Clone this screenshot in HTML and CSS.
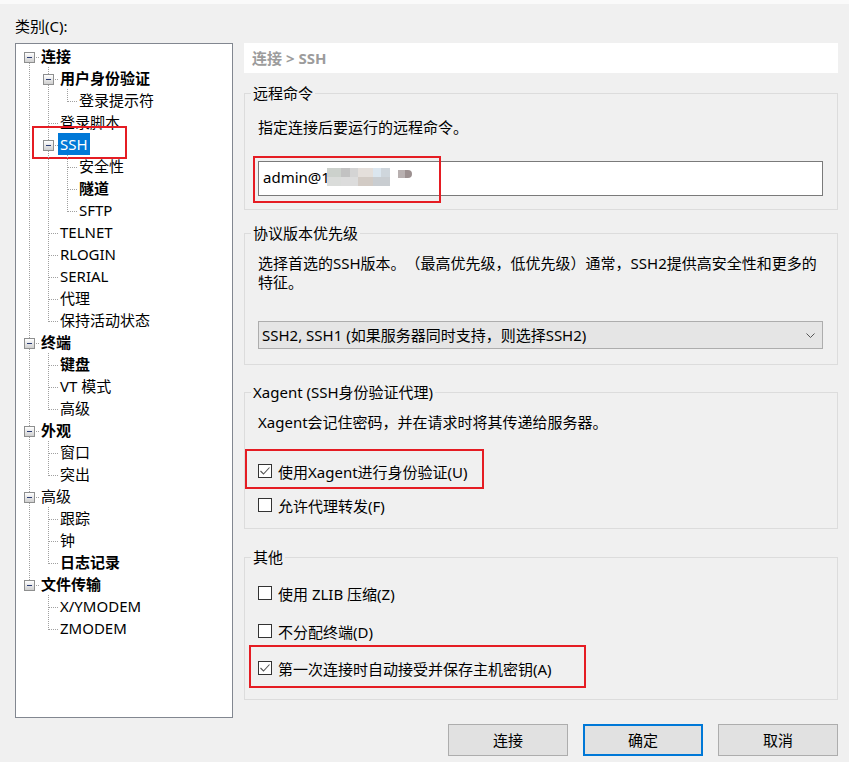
FILE: index.html
```html
<!DOCTYPE html>
<html lang="zh-CN">
<head>
<meta charset="utf-8">
<title>SSH</title>
<link rel="stylesheet" href="styles.css">
</head>
<body>
<div class="topband"></div>
<div class="dialog">
  <div class="main">
    <div class="left">
      <div class="cat-label">类别(C):</div>
      <div class="tree">
        <div class="row"><span class="c first"><i class="exp"></i></span><span class="lbl b">连接</span></div>
        <div class="row"><span class="c v"></span><span class="c tee"><i class="exp"></i></span><span class="lbl b">用户身份验证</span></div>
        <div class="row"><span class="c v"></span><span class="c v"></span><span class="c ell"></span><span class="lbl">登录提示符</span></div>
        <div class="row"><span class="c v"></span><span class="c tee"></span><span class="lbl">登录脚本</span></div>
        <div class="row"><span class="c v"></span><span class="c tee"><i class="exp"></i></span><span class="lbl sel">SSH</span><div class="annot a-ssh"></div></div>
        <div class="row"><span class="c v"></span><span class="c v"></span><span class="c tee"></span><span class="lbl">安全性</span></div>
        <div class="row"><span class="c v"></span><span class="c v"></span><span class="c tee"></span><span class="lbl b">隧道</span></div>
        <div class="row"><span class="c v"></span><span class="c v"></span><span class="c ell"></span><span class="lbl">SFTP</span></div>
        <div class="row"><span class="c v"></span><span class="c tee"></span><span class="lbl">TELNET</span></div>
        <div class="row"><span class="c v"></span><span class="c tee"></span><span class="lbl">RLOGIN</span></div>
        <div class="row"><span class="c v"></span><span class="c tee"></span><span class="lbl">SERIAL</span></div>
        <div class="row"><span class="c v"></span><span class="c tee"></span><span class="lbl">代理</span></div>
        <div class="row"><span class="c v"></span><span class="c ell"></span><span class="lbl">保持活动状态</span></div>
        <div class="row"><span class="c tee"><i class="exp"></i></span><span class="lbl b">终端</span></div>
        <div class="row"><span class="c v"></span><span class="c tee"></span><span class="lbl b">键盘</span></div>
        <div class="row"><span class="c v"></span><span class="c tee"></span><span class="lbl">VT 模式</span></div>
        <div class="row"><span class="c v"></span><span class="c ell"></span><span class="lbl">高级</span></div>
        <div class="row"><span class="c tee"><i class="exp"></i></span><span class="lbl b">外观</span></div>
        <div class="row"><span class="c v"></span><span class="c tee"></span><span class="lbl">窗口</span></div>
        <div class="row"><span class="c v"></span><span class="c ell"></span><span class="lbl">突出</span></div>
        <div class="row"><span class="c tee"><i class="exp"></i></span><span class="lbl">高级</span></div>
        <div class="row"><span class="c v"></span><span class="c tee"></span><span class="lbl">跟踪</span></div>
        <div class="row"><span class="c v"></span><span class="c tee"></span><span class="lbl">钟</span></div>
        <div class="row"><span class="c v"></span><span class="c ell"></span><span class="lbl b">日志记录</span></div>
        <div class="row"><span class="c ell"><i class="exp"></i></span><span class="lbl b">文件传输</span></div>
        <div class="row"><span class="c"></span><span class="c tee"></span><span class="lbl">X/YMODEM</span></div>
        <div class="row"><span class="c"></span><span class="c ell"></span><span class="lbl">ZMODEM</span></div>
      </div>
    </div>

    <div class="right">
      <div class="crumb">连接 &gt; SSH</div>

      <fieldset class="grp g1">
        <legend>远程命令</legend>
        <div class="body">
          <p class="desc d1">指定连接后要运行的远程命令。</p>
          <div class="cmd">
            <div class="input"><span>admin@1</span><svg class="blur" width="90" height="18" viewBox="0 0 90 18"><rect x="0" y="0" width="14" height="9" fill="#ccd1cc"/><rect x="0" y="9" width="14" height="9" fill="#dadcda"/><rect x="14" y="0" width="9" height="9" fill="#c2c2c2"/><rect x="23" y="0" width="8" height="9" fill="#d4d4d4"/><rect x="14" y="9" width="17" height="9" fill="#dcdcdc"/><rect x="31" y="0" width="15" height="9" fill="#e4dfdb"/><rect x="31" y="9" width="15" height="9" fill="#d2cbc5"/><rect x="46" y="0" width="8" height="9" fill="#dbe6ef"/><rect x="54" y="0" width="9" height="9" fill="#cfd6dc"/><rect x="46" y="9" width="17" height="9" fill="#c9cdd1"/><rect x="71" y="2" width="14" height="8" rx="4" fill="#9c9090"/><rect x="71" y="2" width="7" height="8" fill="#b8b0b0"/></svg></div>
            <div class="annot a-cmd"></div>
          </div>
        </div>
      </fieldset>

      <fieldset class="grp g2">
        <legend>协议版本优先级</legend>
        <div class="body">
          <p class="desc d2"><span class="line">选择首选的SSH版本。（最高优先级，低优先级）通常，SSH2提供高安全性和更多的</span><span class="line">特征。</span></p>
          <div class="select">
            <span>SSH2, SSH1 (如果服务器同时支持，则选择SSH2)</span>
            <svg class="chev" width="9" height="5" viewBox="0 0 9 5"><path d="M0.5 0.5 L4.5 4.5 L8.5 0.5" fill="none" stroke="#555" stroke-width="1"/></svg>
          </div>
        </div>
      </fieldset>

      <fieldset class="grp g3">
        <legend>Xagent (SSH身份验证代理)</legend>
        <div class="body">
          <p class="desc d3">Xagent会记住密码，并在请求时将其传递给服务器。</p>
          <div class="cb cb1"><span class="box on"><svg width="12" height="12" viewBox="0 0 12 12"><path d="M1.5 6 L4.5 9 L10.5 2.5" fill="none" stroke="#555" stroke-width="1.1"/></svg></span><span>使用Xagent进行身份验证(U)</span><div class="annot a-cb1"></div></div>
          <div class="cb cb2"><span class="box"></span><span>允许代理转发(F)</span></div>
        </div>
      </fieldset>

      <fieldset class="grp g4">
        <legend>其他</legend>
        <div class="body">
          <div class="cb cb3"><span class="box"></span><span>使用 ZLIB 压缩(Z)</span></div>
          <div class="cb cb4"><span class="box"></span><span>不分配终端(D)</span></div>
          <div class="cb cb5"><span class="box on"><svg width="12" height="12" viewBox="0 0 12 12"><path d="M1.5 6 L4.5 9 L10.5 2.5" fill="none" stroke="#555" stroke-width="1.1"/></svg></span><span>第一次连接时自动接受并保存主机密钥(A)</span><div class="annot a-cb5"></div></div>
        </div>
      </fieldset>
    </div>
  </div>

  <div class="buttons">
    <div class="btn">连接</div>
    <div class="btn def">确定</div>
    <div class="btn">取消</div>
  </div>
</div>
</body>
</html>
```

FILE: styles.css
```css
:root {
  --vd: repeating-linear-gradient(to bottom, #a0a0a0 0 1px, transparent 1px 2px);
  --hd: repeating-linear-gradient(to right, #a0a0a0 0 1px, transparent 1px 2px);
}

* { box-sizing: border-box; }

html, body {
  margin: 0;
  padding: 0;
}

body {
  background: #f0f0f0;
  color: #000;
  font-family: "Noto Sans", "Noto Sans CJK SC", sans-serif;
  font-size: 15px;
  text-spacing-trim: space-all;
  width: 849px;
  height: 762px;
  overflow: hidden;
}

.topband {
  height: 4px;
  background: #fafafa;
}

.dialog {
  padding: 0 11px 0 15px;
}

.main {
  display: flex;
  gap: 11px;
  align-items: flex-start;
}

.left {
  width: 218px;
  flex: none;
}

.cat-label {
  height: 39px;
  padding-top: 11px;
  line-height: 22px;
}

.tree {
  height: 675px;
  border: 1px solid #828790;
  background: #fff;
  padding-top: 1px;
}

.row {
  position: relative;
  display: flex;
  height: 22px;
  padding-left: 4px;
}

.c {
  display: block;
  width: 19px;
  height: 22px;
  flex: none;
  background-repeat: no-repeat;
}

.v {
  background-image: var(--vd);
  background-size: 1px 22px;
  background-position: 9px 0;
}

.tee {
  background-image: var(--vd), var(--hd);
  background-size: 1px 22px, 9px 1px;
  background-position: 9px 0, 10px 12px;
}

.ell {
  background-image: var(--vd), var(--hd);
  background-size: 1px 13px, 9px 1px;
  background-position: 9px 0, 10px 12px;
}

.first {
  background-image: var(--vd), var(--hd);
  background-size: 1px 10px, 9px 1px;
  background-position: 9px 12px, 10px 12px;
}

.exp {
  display: block;
  width: 11px;
  height: 11px;
  margin: 7px 0 0 4px;
  border: 1px solid #8e8f8f;
  background:
    linear-gradient(#2b3c74, #2b3c74) center / 5px 1px no-repeat,
    linear-gradient(#ffffff, #cfcfcf);
}

.lbl {
  display: block;
  height: 22px;
  line-height: 22px;
  padding: 0 2px;
  white-space: nowrap;
}

.b { font-weight: bold; }

.sel {
  background: #0078d7;
  color: #fff;
}

.annot {
  position: absolute;
  border: 2px solid #e51c23;
  pointer-events: none;
}

.a-ssh { left: 16px; top: -7px; width: 95px; height: 33px; }

.right {
  width: 594px;
  flex: none;
  padding-top: 39px;
}

.crumb {
  height: 30px;
  line-height: 30px;
  background: #fff;
  padding-left: 8px;
  color: #9c9c9c;
  font-weight: bold;
}

.grp {
  margin: 0;
  padding: 0;
  border: 1px solid #dcdcdc;
  min-width: 0;
}

.grp legend {
  padding: 0 2px;
  margin-left: 6px;
  line-height: 20px;
  height: 20px;
  white-space: nowrap;
}

.g1 { margin-top: 10px; }
.g2 { margin-top: 13px; }
.g3 { margin-top: 17px; }
.g4 { margin-top: 18px; }

.body {
  padding: 0 14px 0 13px;
}

.g1 .body { padding-bottom: 13px; }
.g2 .body { padding-bottom: 15px; }
.g3 .body { padding-bottom: 13px; }
.g4 .body { padding-bottom: 21px; }

.desc {
  margin: 0;
  line-height: 20px;
  white-space: nowrap;
}

.d1 { margin-top: 14px; }
.d2 { margin-top: 11px; line-height: 19px; }
.d2 .line { display: block; }
.d3 { margin-top: 10px; }

.cmd {
  position: relative;
  margin-top: 24px;
}

.input {
  height: 35px;
  border: 1px solid #7a7a7a;
  background: #fff;
  padding-left: 4px;
  display: flex;
  align-items: center;
  padding-bottom: 3px;
}

.blur {
  display: block;
  margin-left: -3px;
}

.a-cmd { left: -5px; top: -5px; width: 188px; height: 47px; }

.select {
  margin-top: 29px;
  height: 28px;
  background: #e5e5e5;
  border: 1px solid #adadad;
  padding: 0 7px 2px 3px;
  display: flex;
  align-items: center;
  justify-content: space-between;
  white-space: nowrap;
}

.chev { display: block; margin-top: 2px; }

.cb {
  position: relative;
  display: flex;
  align-items: center;
  height: 20px;
  gap: 6px;
  white-space: nowrap;
}

.box {
  width: 14px;
  height: 14px;
  flex: none;
  border: 1px solid #333;
  background: #fff;
  display: flex;
  align-items: center;
  justify-content: center;
}

.box svg { display: block; }

.cb1 { margin-top: 29px; }
.cb2 { margin-top: 14px; }
.cb3 { margin-top: 16px; }
.cb4 { margin-top: 18px; }
.cb5 { margin-top: 17px; }

.a-cb1 { left: -13px; top: -12px; width: 239px; height: 40px; }
.a-cb5 { left: -9px; top: -13px; width: 337px; height: 43px; }

.buttons {
  display: flex;
  justify-content: flex-end;
  gap: 15px;
  margin-top: 6px;
}

.btn {
  width: 120px;
  height: 32px;
  border: 1px solid #adadad;
  background: #e1e1e1;
  display: flex;
  align-items: center;
  justify-content: center;
  padding-bottom: 2px;
}

.btn.def {
  border: 2px solid #0078d7;
}
```
